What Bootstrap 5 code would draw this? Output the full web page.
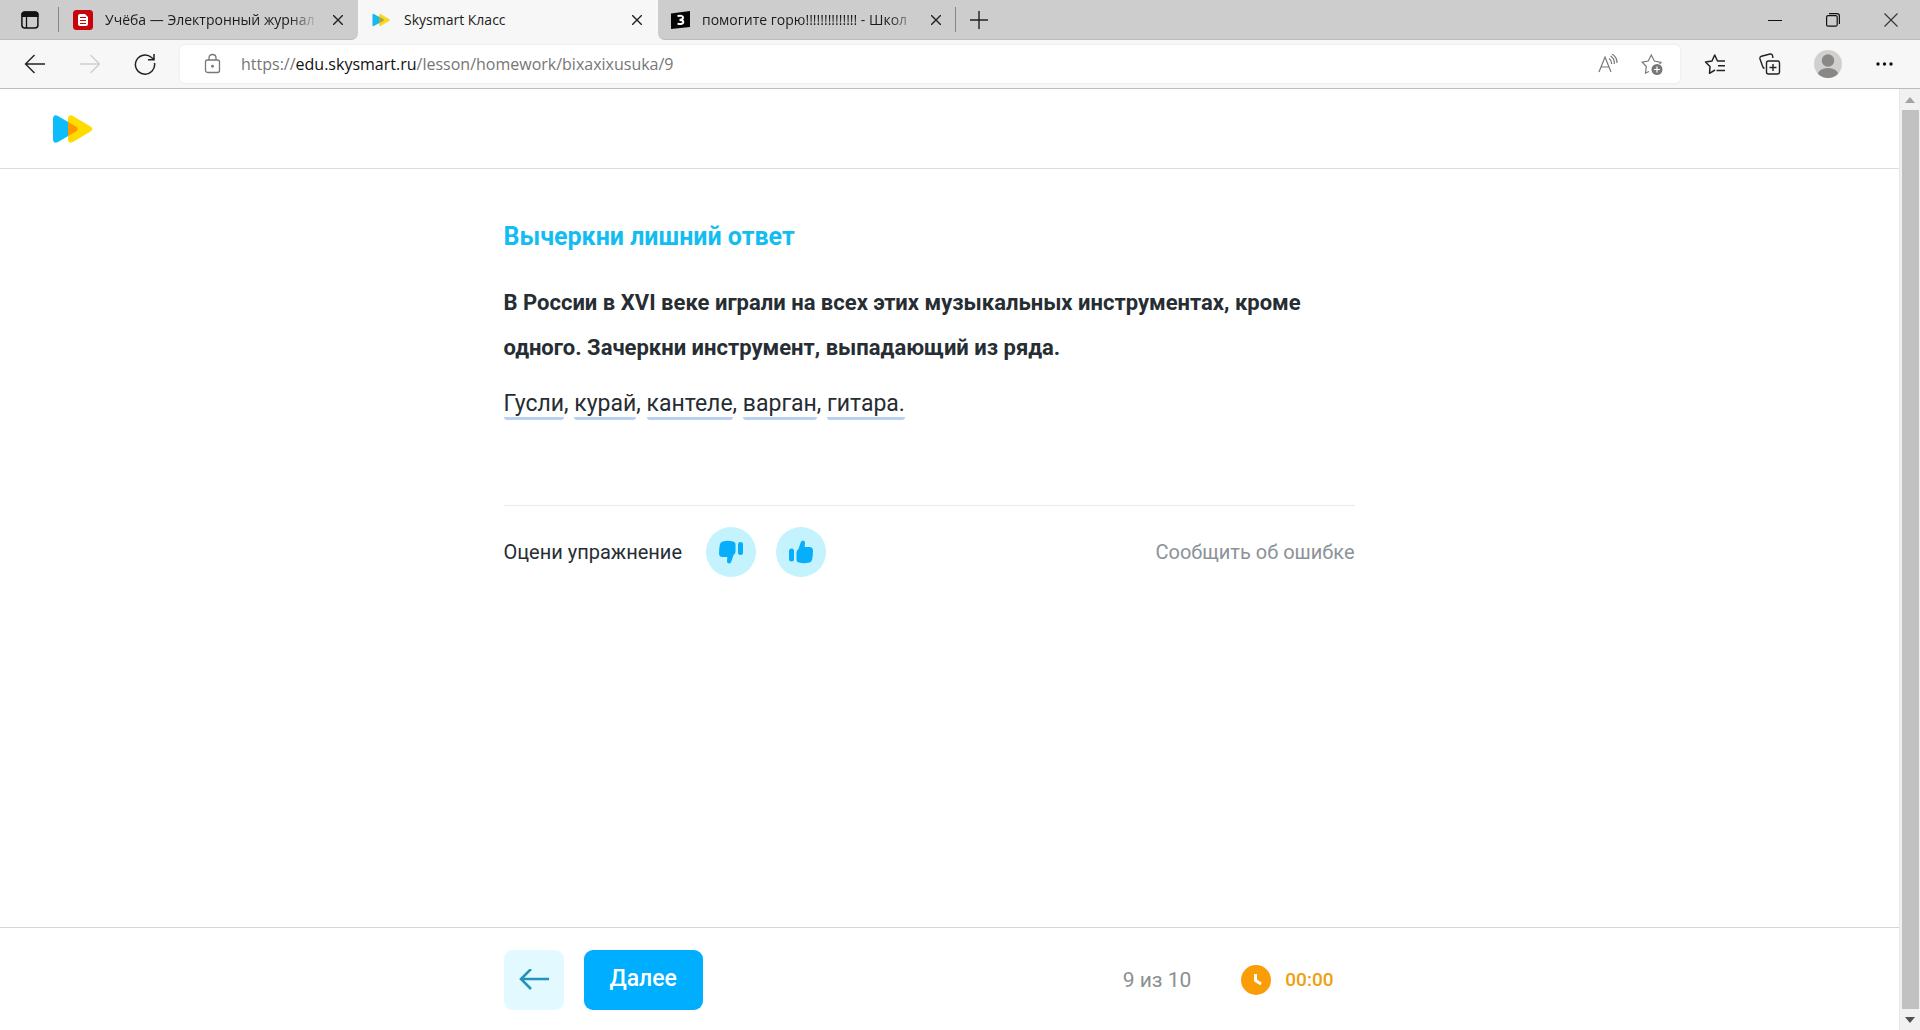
<!DOCTYPE html>
<html lang="ru">
<head>
<meta charset="utf-8">
<meta name="viewport" content="width=device-width, initial-scale=1">
<title>Skysmart Класс</title>
<link href="https://cdn.jsdelivr.net/npm/bootstrap@5.3.0/dist/css/bootstrap.min.css" rel="stylesheet">
<script src="https://cdn.jsdelivr.net/npm/bootstrap@5.3.0/dist/js/bootstrap.bundle.min.js"></script>
<style>
  body { font-family: Roboto, "Liberation Sans", sans-serif; color: #262d33; background: #fff; }
  button { border: 0; background: none; padding: 0; color: inherit; line-height: 1; }
  a { text-decoration: none; }
  svg { display: block; flex: none; }
  .chrome { font-family: "Open Sans", "Noto Sans", sans-serif; }

  .tab-strip { height: 40px; background: #f7f7f7; }
  .strip-part { background: #cdcdcd; border-bottom: 1px solid #bdbdbd; }
  .part-left { width: 358px; border-bottom-right-radius: 7px; padding: 0 15px 0 20px; }
  .part-right { border-bottom-left-radius: 7px; padding: 0 22px 0 13px; }
  .tab-active { width: 300px; padding: 0 16px 0 14px; gap: 14px; }
  .tab-label { font-size: 14px; line-height: 20px; color: #1b1b1b; white-space: nowrap; overflow: hidden; }
  .tab-fade { -webkit-mask-image: linear-gradient(90deg, #000 calc(100% - 30px), transparent); mask-image: linear-gradient(90deg, #000 calc(100% - 30px), transparent); }
  .label-last { width: 217px; }
  .tab-rule { width: 1px; height: 25px; background: #858585; }
  .gap-tab { gap: 12px; }
  .gap-rule { gap: 14px; }
  .gap-window { gap: 44px; }

  .tool-bar { height: 49px; background: #f7f7f7; border-bottom: 1px solid #bcbcbc; padding: 0 27px 0 24px; gap: 24px; }
  .gap-nav { gap: 33px; }
  .gap-inner { gap: 23px; }
  .address { height: 38px; background: #fff; border-radius: 5px; box-shadow: 0 0 3px rgba(0,0,0,.08); padding: 0 17px 0 24px; gap: 19px; }
  .address-text { font-size: 16px; line-height: 24px; color: #767676; }
  .address-text b { font-weight: 400; color: #111; }

  .page-head { height: 80px; border-bottom: 1px solid #dcdcdc; padding-left: 53px; }
  .lesson { max-width: 892px; padding-right: 41px; }
  .lesson-title { font-size: 25px; line-height: 36px; font-weight: 700; color: #12bdf2; margin: 50px 0 25px; }
  .lesson-task { font-size: 22px; line-height: 45px; font-weight: 700; color: #262d33; margin: 0 0 16px; }
  .lesson-words { font-size: 23px; line-height: 36px; margin: 0 0 83px; }
  .word { line-height: 27px; border-bottom: 3px solid #b8d0f1; border-radius: 0 0 3px 3px; }
  .rate-row { border-top: 1px solid #e8eaeb; padding-top: 21px; font-size: 20px; line-height: 28px; }
  .gap-rate { gap: 20px; }
  .rate-label { min-width: 182px; }
  .rate-btn { width: 50px; height: 50px; border-radius: 50%; background: #c4f3fd; }
  .report { color: #8c9298; }

  .page-foot { height: 103px; border-top: 1px solid #d6d6d6; padding-top: 2px; }
  .back-btn { width: 60px; height: 60px; border-radius: 9px; background: #e2faff; }
  .next-btn { height: 60px; border-radius: 9px; background: #00aeff; color: #fff; font-size: 23px; font-weight: 500; padding: 0 26px 4px; }
  .gap-count { gap: 50px; padding-right: 21px; }
  .count { font-size: 21px; line-height: 32px; color: #8a8f92; }
  .timer { font-size: 19px; line-height: 28px; font-weight: 500; color: #eda010; }

  .scroll-col { width: 21px; background: #f1f1f1; border-left: 1px solid #e8e8e8; }
  .scroll-end { height: 21px; }
  .scroll-thumb { width: 17px; background: #c1c1c1; }
</style>
</head>
<body class="d-flex flex-column vh-100 overflow-hidden">

<header class="chrome flex-shrink-0">
  <div class="tab-strip d-flex">
    <div class="strip-part part-left d-flex align-items-center flex-shrink-0 gap-rule">
      <button class="me-1" aria-label="Меню вкладок"><svg width="20" height="20" viewBox="0 0 20 20"><rect x="1.9" y="2" width="16" height="16" rx="3" fill="none" stroke="#111" stroke-width="1.5"/><path d="M1.5 7V4.500Q1.500 1.500 4.500 1.500H15.500Q18.500 1.500 18.500 4.500V7Z" fill="#111"/><path d="M6.500 7V18" stroke="#111" stroke-width="1.300"/></svg></button>
      <div class="tab-rule"></div>
      <div class="d-flex align-items-center flex-grow-1 gap-tab overflow-hidden">
        <svg width="20" height="20" viewBox="0 0 20 20"><rect width="20" height="20" rx="3.500" fill="#c8040a"/><path d="M5 6Q5 4 7 4H12L15 7V14Q15 16 13 16H7Q5 16 5 14Z" fill="#fff"/><path d="M7 7.500H13M7 10.500H13M7 13.500H13" stroke="#c8040a"/></svg>
        <span class="tab-label tab-fade flex-grow-1">Учёба — Электронный журнал</span>
      </div>
      <button aria-label="Закрыть"><svg width="10" height="10" viewBox="0 0 10 10"><path d="M0 0L10 10M10 0L0 10" stroke="#222" stroke-width="1.400"/></svg></button>
    </div>
    <div class="tab-active d-flex align-items-center flex-shrink-0">
      <svg width="18" height="14" viewBox="0 0 40 28"><path d="M1 3Q1-1 5 1L25 12Q28 14 25 16L5 27Q1 29 1 25Z" fill="#17b9ee"/><path d="M16 3Q16-1 20 1L38 12Q41 14 38 16L20 27Q16 29 16 25Z" fill="#f8d726"/><path d="M16 7L25 12Q28 14 25 16L16 21Z" fill="#a5a440"/></svg>
      <span class="tab-label flex-grow-1">Skysmart Класс</span>
      <button aria-label="Закрыть"><svg width="10" height="10" viewBox="0 0 10 10"><path d="M0 0L10 10M10 0L0 10" stroke="#222" stroke-width="1.400"/></svg></button>
    </div>
    <div class="strip-part part-right d-flex align-items-center flex-grow-1">
      <div class="d-flex align-items-center gap-rule">
        <div class="d-flex align-items-center gap-tab">
          <svg width="19" height="18" viewBox="0 0 19 18"><path d="M0 2.500L19 0V16L0 18Z" fill="#050505"/><path d="M6.500 5Q12 4 12 6.500Q12 8.700 8.500 8.900Q12.300 9 12.300 11Q12.300 13.500 6.500 12.800" fill="none" stroke="#fff" stroke-width="2"/></svg>
          <span class="tab-label tab-fade label-last">помогите горю!!!!!!!!!!!!!! - Школ</span>
          <button aria-label="Закрыть"><svg width="10" height="10" viewBox="0 0 10 10"><path d="M0 0L10 10M10 0L0 10" stroke="#222" stroke-width="1.400"/></svg></button>
        </div>
        <div class="tab-rule"></div>
        <button aria-label="Новая вкладка"><svg width="18" height="18" viewBox="0 0 18 18"><path d="M9 0V18M0 9H18" stroke="#222" stroke-width="1.400"/></svg></button>
      </div>
      <div class="ms-auto d-flex align-items-center gap-window">
        <button aria-label="Свернуть"><svg width="14" height="14" viewBox="0 0 14 14"><path d="M0 7.500H14" stroke="#111"/></svg></button>
        <button aria-label="Развернуть"><svg width="14" height="14" viewBox="0 0 14 14"><rect x=".6" y="2.600" width="10.600" height="10.600" rx="1.500" fill="none" stroke="#111" stroke-width="1.200"/><path d="M3 .6H11Q13.400 .6 13.400 3V11" fill="none" stroke="#111" stroke-width="1.200"/></svg></button>
        <button aria-label="Закрыть окно"><svg width="14" height="14" viewBox="0 0 14 14"><path d="M.5 .5L13.500 13.500M13.500 .5L.5 13.500" stroke="#333" stroke-width="1.100"/></svg></button>
      </div>
    </div>
  </div>

  <div class="tool-bar d-flex align-items-center">
    <div class="d-flex align-items-center gap-nav">
      <button aria-label="Назад"><svg width="22" height="22" viewBox="0 0 22 22" fill="none" stroke="#222" stroke-width="1.400"><path d="M21 11H1.500M10.500 2L1.500 11L10.500 20"/></svg></button>
      <button aria-label="Вперёд"><svg width="22" height="22" viewBox="0 0 22 22" fill="none" stroke="#cfcfcf" stroke-width="1.400"><path d="M1 11H20.500M11.500 2L20.500 11L11.500 20"/></svg></button>
      <button aria-label="Обновить"><svg width="22" height="22" viewBox="0 0 22 22" fill="none" stroke="#222" stroke-width="1.500"><path d="M20.500 10A9.600 9.600 0 1 1 17.500 4.500L20 6.500M20 1V6.800H14"/></svg></button>
    </div>
    <div class="address d-flex align-items-center flex-grow-1">
      <svg width="18" height="22" viewBox="0 0 18 22" fill="none" stroke="#777" stroke-width="1.300"><rect x="1.500" y="7" width="14" height="12.500" rx="2"/><path d="M5 7V5Q5 1.500 8.500 1.500Q12 1.500 12 5V7"/><circle cx="8.500" cy="13.300" r=".8" fill="#777"/></svg>
      <a class="address-text flex-grow-1" href="#">https://<b>edu.skysmart.ru</b>/lesson/homework/bixaxixusuka/9</a>
      <div class="d-flex align-items-center gap-inner">
        <button aria-label="Прочесть вслух"><svg width="20" height="20" viewBox="0 0 20 20" fill="none" stroke="#777" stroke-width="1.200"><path d="M1 18L7 3L13 18M3 13H11M11 4.500Q14 6.500 13.500 10M12.500 2Q17 5 16.200 10M14 0Q19.500 3.500 18.800 9"/></svg></button>
        <button aria-label="В избранное"><svg width="22" height="22" viewBox="0 0 22 22"><path d="M8 18.500L4.500 20L5.300 13.500L1.200 9.200L7.200 8L10.300 2L13.300 8L20 9.300L18.500 11" fill="none" stroke="#777" stroke-width="1.200"/><circle cx="16" cy="16.500" r="5.500" fill="#777"/><path d="M16 13.500V19.500M13 16.500H19" stroke="#fff" stroke-width="1.200"/></svg></button>
      </div>
    </div>
    <div class="d-flex align-items-center gap-nav">
      <button aria-label="Избранное"><svg width="22" height="22" viewBox="0 0 22 22" fill="none" stroke="#222" stroke-width="1.500" stroke-linejoin="round"><path d="M11 17L5.500 20.300L6 13.500L1.500 9L8 8L10.700 2L13.500 8H21M14 12.800H21M12.500 17.500H21"/></svg></button>
      <button aria-label="Коллекции"><svg width="22" height="22" viewBox="0 0 22 22" fill="none" stroke="#222" stroke-width="1.400"><rect x="7.500" y="8" width="13" height="13" rx="2"/><path d="M14 11V18M10.500 14.500H17.500M5.500 15.500Q4 15 3.500 13L1 6Q.5 4 2.500 3.200L11 1Q13 .8 13.500 2.500L14 5"/></svg></button>
      <button aria-label="Профиль"><svg width="28" height="28" viewBox="0 0 28 28"><defs><clipPath id="ava"><circle cx="14" cy="14" r="14"/></clipPath></defs><g clip-path="url(#ava)"><rect width="28" height="28" fill="#d2d0ce"/><circle cx="14" cy="10.500" r="6.200" fill="#8a8886"/><ellipse cx="14" cy="25" rx="10.500" ry="7" fill="#8a8886"/></g></svg></button>
      <button aria-label="Ещё"><svg width="18" height="4" viewBox="0 0 18 4" fill="#111"><circle cx="3" cy="2" r="1.700"/><circle cx="9.500" cy="2" r="1.700"/><circle cx="16" cy="2" r="1.700"/></svg></button>
    </div>
  </div>
</header>

<div class="d-flex flex-grow-1">
  <div class="d-flex flex-column flex-grow-1">
    <div class="page-head d-flex align-items-center flex-shrink-0">
      <a href="#" aria-label="Skysmart"><svg width="40" height="28" viewBox="0 0 40 28"><path d="M0 3.500Q.5-.8 4.500 .8L23 11.500Q26.500 14 23 16.500L4.500 27.200Q.5 28.800 0 24.500Z" fill="#0dbdfb"/><path d="M15 3.500Q15.500-.8 19.500 .8L37.500 11.500Q41 14 37.500 16.500L19.500 27.200Q15.500 28.800 15 24.500Z" fill="#ffdc00"/><path d="M15 6.900L23 11.500Q26.500 14 23 16.500L15 21.100Z" fill="#ff9500"/></svg></a>
    </div>

    <main class="lesson w-100 mx-auto flex-grow-1">
      <h1 class="lesson-title">Вычеркни лишний ответ</h1>
      <p class="lesson-task">В России в XVI веке играли на всех этих музыкальных инструментах, кроме одного. Зачеркни инструмент, выпадающий из ряда.</p>
      <p class="lesson-words"><button class="word">Гусли</button>, <button class="word">курай</button>, <button class="word">кантеле</button>, <button class="word">варган</button>, <button class="word">гитара.</button></p>
      <div class="rate-row d-flex align-items-center">
        <div class="me-auto d-flex align-items-center gap-rate">
          <span class="rate-label">Оцени упражнение</span>
          <button class="rate-btn d-flex align-items-center justify-content-center" aria-label="Не нравится"><svg width="24" height="24" viewBox="0 0 24 24" fill="#06aefb"><path d="M3.500 1.500Q9 .2 14 1.500Q16.500 2 16.500 4V11.500Q16.500 13.500 14.500 15L12.500 21Q12 23.500 10 23.500Q7.800 23.500 8 21L8.300 17H3.500Q.2 17 0 13.500Q0 8 1 4Q1.600 2 3.500 1.500Z"/><rect x="19" y="2" width="5" height="13" rx="2.500"/></svg></button>
          <button class="rate-btn d-flex align-items-center justify-content-center" aria-label="Нравится"><svg width="24" height="24" viewBox="0 0 24 24" fill="#06aefb"><path d="M20.500 22.500Q15 23.800 10 22.500Q7.500 22 7.500 20V12.500Q7.500 10.500 9.500 9L11.500 3Q12 .5 14 .5Q16.200 .5 16 3L15.700 7H20.500Q23.800 7 24 10.500Q24 16 23 20Q22.400 22 20.500 22.500Z"/><rect y="8.500" width="5" height="13" rx="2.500"/></svg></button>
        </div>
        <a class="report" href="#">Сообщить об ошибке</a>
      </div>
    </main>

    <footer class="page-foot flex-shrink-0 d-flex align-items-center">
      <div class="lesson w-100 mx-auto d-flex align-items-center gap-rate">
        <button class="back-btn d-flex align-items-center justify-content-center" aria-label="Назад"><svg width="30" height="22" viewBox="0 0 30 22" fill="none" stroke="#2293b9" stroke-width="2.600"><path d="M30 10H2M12 0L2 10L12 20"/></svg></button>
        <button class="next-btn">Далее</button>
        <div class="ms-auto d-flex align-items-center gap-count">
          <span class="count">9 из 10</span>
          <span class="timer d-flex align-items-center gap-rule"><svg width="30" height="30" viewBox="0 0 30 30"><circle cx="15" cy="15" r="15" fill="#fb9d08"/><path d="M14.500 9V15.500L20 19" fill="none" stroke="#fff" stroke-width="3"/></svg>00:00</span>
        </div>
      </div>
    </footer>
  </div>

  <div class="scroll-col flex-shrink-0 d-flex flex-column align-items-center">
    <div class="scroll-end flex-shrink-0 d-flex align-items-center"><svg width="10" height="6" viewBox="0 0 10 6"><path d="M0 6L5 0L10 6Z" fill="#a3a3a3"/></svg></div>
    <div class="scroll-thumb flex-grow-1"></div>
    <div class="scroll-end flex-shrink-0 d-flex align-items-center"><svg width="10" height="6" viewBox="0 0 10 6"><path d="M0 0L5 6L10 0Z" fill="#505050"/></svg></div>
  </div>
</div>
</body>
</html>
